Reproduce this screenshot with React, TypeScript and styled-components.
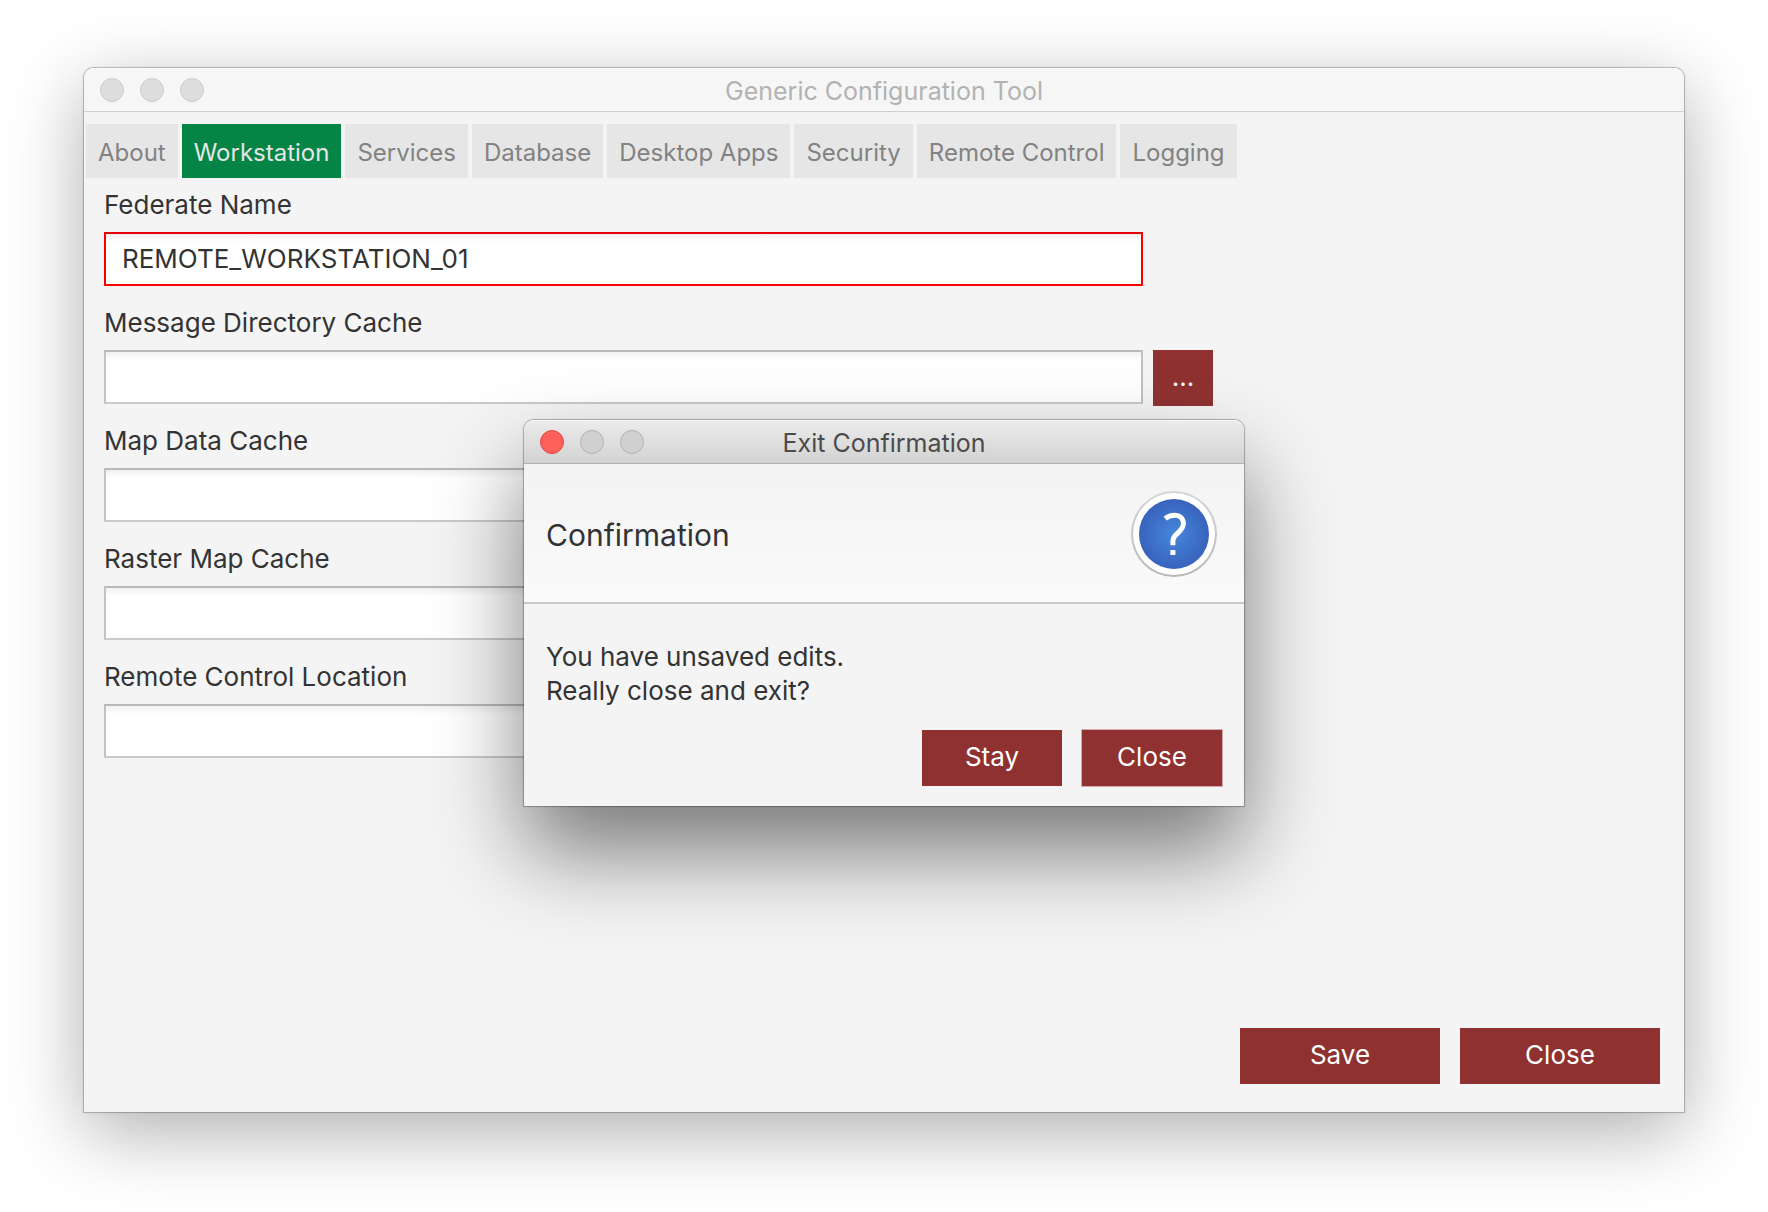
import React, { useState } from "react";
import styled, { createGlobalStyle, css } from "styled-components";

const GlobalStyle = createGlobalStyle`
  * { box-sizing: border-box; }
  body {
    margin: 0;
    background: #ffffff;
    color: #333333;
    font-family: Inter, "Liberation Sans", sans-serif;
    font-size: 26px;
  }
  button, input { font: inherit; }
`;

const Desktop = styled.main`
  position: relative;
  display: flex;
  min-height: 100vh;
  padding: 68px 84px 100px;
`;

const AppWindow = styled.section`
  flex: 1;
  display: flex;
  flex-direction: column;
  border-radius: 10px 10px 0 0;
  background: #f4f4f4;
  box-shadow: 0 0 1px 1px rgba(0, 0, 0, 0.26), 0 20px 76px rgba(0, 0, 0, 0.32);
`;

const TitleBar = styled.header<{ $active?: boolean }>`
  display: grid;
  grid-template-columns: 1fr auto 1fr;
  align-items: center;
  height: 44px;
  padding: 0 16px;
  border-radius: 10px 10px 0 0;
  border-bottom: 1px solid ${(p) => (p.$active ? "#b0b0b0" : "#cfcfcf")};
  background: ${(p) => (p.$active ? "linear-gradient(#ececec, #d2d2d2)" : "#f6f6f6")};
  box-shadow: inset 0 1px 0 ${(p) => (p.$active ? "#f7f7f7" : "#fcfcfc")};
  color: ${(p) => (p.$active ? "#4b4b4b" : "#b2b2b2")};
`;

const WindowTitle = styled.h1`
  margin: 0;
  padding-top: 2px;
  font-size: 25px;
  line-height: 32px;
  font-weight: 400;
`;

const Lights = styled.div`
  display: flex;
  gap: 16px;
`;

const lightColors = {
  close: css`background: #fc605b; border-color: #df4744;`,
  disabled: css`background: #d0d0d0; border-color: #b3b3b3;`,
  inactive: css`background: #dddddd; border-color: #cccccc;`,
};

const Light = styled.button<{ $kind: keyof typeof lightColors }>`
  width: 24px;
  height: 24px;
  padding: 0;
  border: 1px solid;
  border-radius: 50%;
  ${(p) => lightColors[p.$kind]}
`;

const Tabs = styled.nav`
  display: flex;
  flex-wrap: wrap;
  gap: 4px;
  padding: 12px 2px 0;
`;

const Tab = styled.button<{ $selected: boolean }>`
  height: 54px;
  padding: 2px 12px 0;
  border: 0;
  background: ${(p) => (p.$selected ? "#048546" : "#e6e6e6")};
  color: ${(p) => (p.$selected ? "#e6e6e6" : "#828282")};
  font-size: 24px;
`;

const Form = styled.form`
  flex: 1;
  display: flex;
  flex-direction: column;
  gap: 8px;
  width: 100%;
  max-width: 1149px;
  padding: 0 20px;
`;

const Field = styled.div`
  display: grid;
  grid-template-columns: 1fr 60px;
  grid-template-rows: 54px 56px;
  column-gap: 10px;
`;

const Label = styled.label`
  grid-column: 1 / -1;
  justify-self: start;
  line-height: 54px;
`;

const TextBox = styled.input<{ $invalid: boolean }>`
  width: 100%;
  min-width: 0;
  height: 54px;
  padding: 0 16px 2px;
  border: 2px solid;
  border-color: ${(p) => (p.$invalid ? "#e80000 #f80000 #ff0000" : "#b9b9b9 #c2c2c2 #cacaca")};
  border-radius: 0;
  outline: 0;
  background: linear-gradient(#f0f0f0, #ffffff 8px);
  color: #333333;
`;

const ActionButton = styled.button<{ $width: number; $focused?: boolean }>`
  width: ${(p) => p.$width}px;
  height: 56px;
  padding: 0 0 4px;
  border: 0;
  background: #8f3131;
  box-shadow: ${(p) => (p.$focused ? "0 0 0 1px #d3a9a9" : "none")};
  color: #ffffff;
`;

const Actions = styled.footer`
  display: flex;
  justify-content: flex-end;
  gap: 20px;
  padding: 0 24px 28px;
`;

const DialogLayer = styled.div`
  position: absolute;
  inset: 0;
  display: flex;
  justify-content: center;
  align-items: flex-start;
  padding-top: 420px;
`;

const Dialog = styled.section`
  width: 720px;
  border-radius: 10px 10px 0 0;
  background: #f4f4f4;
  box-shadow: 0 0 1px 1px rgba(0, 0, 0, 0.28), 0 46px 88px rgba(0, 0, 0, 0.5);
`;

const DialogHeader = styled.div`
  display: flex;
  align-items: center;
  justify-content: space-between;
  height: 140px;
  padding: 2px 26px 0 22px;
  border-bottom: 2px solid #c8c8c8;
  background: linear-gradient(#f3f3f3, #fafafa);
`;

const DialogHeading = styled.h2`
  margin: 0;
  padding-top: 2px;
  font-size: 30px;
  font-weight: 400;
`;

const DialogMessage = styled.p`
  margin: 0;
  padding: 36px 22px 22px;
  line-height: 34px;
`;

const DialogActions = styled.div`
  display: flex;
  justify-content: flex-end;
  gap: 20px;
  padding: 0 22px 20px;
`;

function QuestionIcon() {
  return (
    <svg width="88" height="88" viewBox="0 0 88 88" aria-hidden="true">
      <defs>
        <radialGradient id="disc">
          <stop offset="0" stopColor="#4687da" />
          <stop offset="1" stopColor="#3863bd" />
        </radialGradient>
        <linearGradient id="rim" x2="0" y2="1">
          <stop offset="0" stopColor="#d6d6d6" />
          <stop offset="1" stopColor="#b8b8b8" />
        </linearGradient>
      </defs>
      <circle cx="44" cy="44" r="43" fill="url(#rim)" />
      <circle cx="44" cy="44" r="41" fill="#ffffff" />
      <circle cx="44" cy="44" r="35" fill="url(#disc)" />
      <path
        d="M35.2 28.6C38 26.2 41 25.2 44.5 25.2C50 25.2 53.4 28.6 53.4 33.6C53.4 42.4 42.9 43.4 42.9 51V55.3"
        fill="none"
        stroke="#ffffff"
        strokeWidth="5"
      />
      <rect x="40.4" y="60" width="5" height="5" fill="#ffffff" />
    </svg>
  );
}

const tabs = ["About", "Workstation", "Services", "Database", "Desktop Apps", "Security", "Remote Control", "Logging"];

const fields = [
  { id: "federate", label: "Federate Name", value: "REMOTE_WORKSTATION_01", invalid: true, browse: false },
  { id: "messages", label: "Message Directory Cache", value: "", invalid: false, browse: true },
  { id: "map", label: "Map Data Cache", value: "", invalid: false, browse: false },
  { id: "raster", label: "Raster Map Cache", value: "", invalid: false, browse: false },
  { id: "remote", label: "Remote Control Location", value: "", invalid: false, browse: false },
];

export default function App() {
  const [selected, setSelected] = useState("Workstation");
  const [open, setOpen] = useState(true);

  return (
    <>
      <GlobalStyle />
      <Desktop>
        <AppWindow>
          <TitleBar>
            <Lights>
              <Light $kind="inactive" aria-label="Close window" />
              <Light $kind="inactive" aria-label="Minimize window" />
              <Light $kind="inactive" aria-label="Zoom window" />
            </Lights>
            <WindowTitle>Generic Configuration Tool</WindowTitle>
          </TitleBar>
          <Tabs>
            {tabs.map((name) => (
              <Tab key={name} $selected={name === selected} onClick={() => setSelected(name)}>
                {name}
              </Tab>
            ))}
          </Tabs>
          <Form>
            {fields.map((f) => (
              <Field key={f.id}>
                <Label htmlFor={f.id}>{f.label}</Label>
                <TextBox id={f.id} type="text" defaultValue={f.value} $invalid={f.invalid} />
                {f.browse && (
                  <ActionButton type="button" $width={60}>
                    ...
                  </ActionButton>
                )}
              </Field>
            ))}
          </Form>
          <Actions>
            <ActionButton $width={200}>Save</ActionButton>
            <ActionButton $width={200} onClick={() => setOpen(true)}>Close</ActionButton>
          </Actions>
        </AppWindow>
        {open && (
          <DialogLayer>
            <Dialog role="dialog" aria-labelledby="dialog-title">
              <TitleBar $active>
                <Lights>
                  <Light $kind="close" aria-label="Close dialog" onClick={() => setOpen(false)} />
                  <Light $kind="disabled" aria-label="Minimize dialog" disabled />
                  <Light $kind="disabled" aria-label="Zoom dialog" disabled />
                </Lights>
                <WindowTitle as="h2" id="dialog-title">Exit Confirmation</WindowTitle>
              </TitleBar>
              <DialogHeader>
                <DialogHeading>Confirmation</DialogHeading>
                <QuestionIcon />
              </DialogHeader>
              <DialogMessage>
                You have unsaved edits.
                <br />
                Really close and exit?
              </DialogMessage>
              <DialogActions>
                <ActionButton $width={140} onClick={() => setOpen(false)}>Stay</ActionButton>
                <ActionButton $width={140} $focused>Close</ActionButton>
              </DialogActions>
            </Dialog>
          </DialogLayer>
        )}
      </Desktop>
    </>
  );
}
